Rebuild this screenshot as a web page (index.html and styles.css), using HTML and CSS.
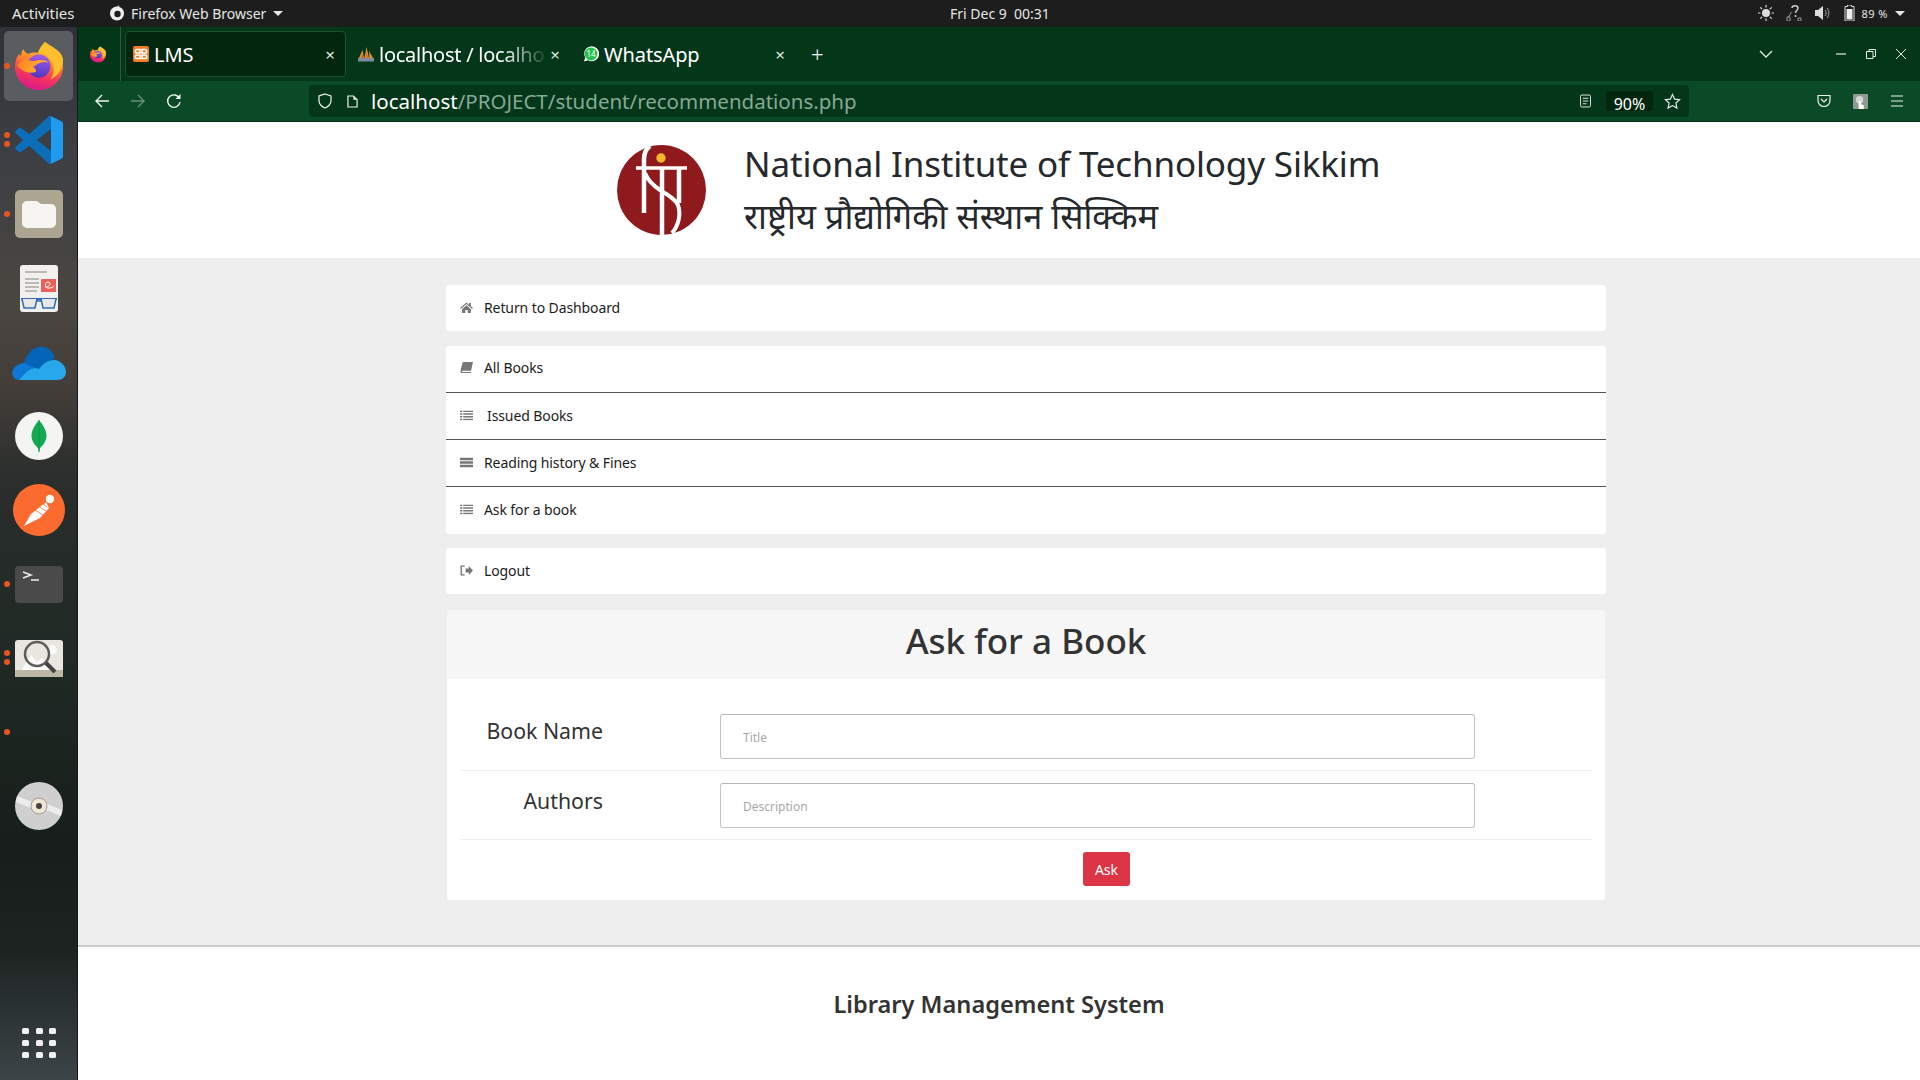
FILE: index.html
```html
<!DOCTYPE html>
<html lang="en">
<head>
<meta charset="utf-8">
<title>LMS</title>
<link rel="stylesheet" href="styles.css">
</head>
<body>
<svg class="defs" width="0" height="0" aria-hidden="true">
  <defs>
    <linearGradient id="fxBody" x1="0.7" y1="0" x2="0.4" y2="1">
      <stop offset="0" stop-color="#ffd93b"/><stop offset="0.35" stop-color="#ff9a26"/><stop offset="0.7" stop-color="#f6365a"/><stop offset="1" stop-color="#d9188f"/>
    </linearGradient>
    <linearGradient id="fxGlobe" x1="0.6" y1="0" x2="0.4" y2="1">
      <stop offset="0" stop-color="#a35ee8"/><stop offset="1" stop-color="#4a35c0"/>
    </linearGradient>
    <linearGradient id="fxFox" x1="0" y1="0" x2="1" y2="0.4">
      <stop offset="0" stop-color="#ff7a1f"/><stop offset="1" stop-color="#ffb52e"/>
    </linearGradient>
    <symbol id="firefox" viewBox="0 0 48 50">
      <path d="M30 1c-3 3-6 7-7 11-4-1-8 0-10 1-2-1-4-3-5-5-1 2-2 5-2 7l-2-2C1 17 0 21 0 26c0 13 11 23 24 23s24-10 24-24C48 14 39 8 30 1z" fill="url(#fxBody)"/>
      <path d="M30 1c-3 3-6 7-7 11 6 0 11 4 14 9 3 6 2 13-2 18 8-4 13-12 13-20 0-8-9-12-18-18z" fill="#ffbe2e"/>
      <circle cx="24" cy="25" r="11.500" fill="url(#fxGlobe)"/>
      <path d="M2 24c3-2 6-5 7-9 2 3 5 5 10 5 5-1 11-2 15 2-4-2-9-1-13 2l-3 2c2 1 3 2 3 5-7 2-14 0-19-7z" fill="url(#fxFox)"/>
    </symbol>
    <symbol id="lines" viewBox="0 0 14 11">
      <path d="M0 0h2.500v1.700H0zM3.500 0H14v1.700H3.500zM0 3h2.500v1.700H0zM3.500 3H14v1.700H3.500zM0 6h2.500v1.700H0zM3.500 6H14v1.700H3.500zM0 9h2.500v1.700H0zM3.500 9H14v1.700H3.500z" fill="#777"/>
    </symbol>
  </defs>
</svg>

<header class="topbar">
  <div class="top-left">
    <span class="activities">Activities</span>
    <span class="app-menu">
      <svg class="ff-mono" viewBox="0 0 16 16"><circle cx="8" cy="8.500" r="7" fill="#eee"/><circle cx="8.500" cy="9" r="3.200" fill="#1d1d1d"/><path d="M9 0l3 4-4 1z" fill="#eee"/></svg>
      Firefox Web Browser
      <i class="caret"></i>
    </span>
  </div>
  <div class="clock">Fri Dec 9&nbsp; 00:31</div>
  <div class="status">
    <svg class="st" viewBox="0 0 16 16"><circle cx="8" cy="8" r="4" fill="#ddd"/><path d="M8 0v2.500M8 13.500V16M0 8h2.500M13.500 8H16M2.300 2.300l1.800 1.800M11.900 11.900l1.800 1.800M2.300 13.700l1.800-1.800M11.900 4.100l1.800-1.800" stroke="#ddd" stroke-width="1.200"/></svg>
    <svg class="st" viewBox="0 0 16 16"><path d="M6 3c0-3 6-3 6 0 0 2-2.500 2.500-2.500 5M9.500 10v2" stroke="#ccc" stroke-width="1.500" fill="none"/><path d="M1 16v-4h3v4zM12 16v-3h3v3zM2.500 12l3-5" stroke="#999" fill="none"/></svg>
    <svg class="st" viewBox="0 0 16 16"><path d="M1 5h3l5-4v14l-5-4H1z" fill="#ddd"/><path d="M11 5c1.500 1.500 1.500 4.500 0 6M13 3c2.500 2.500 2.500 7.500 0 10" stroke="#aaa" fill="none"/></svg>
    <svg class="st batt" viewBox="0 0 10 16"><path d="M3 0h4v1.500h2.500V16H.5V1.500H3z" fill="none" stroke="#ddd"/><rect x="2" y="4" width="6" height="10.500" fill="#eee"/></svg>
    <span class="pct">89 %</span>
    <i class="caret"></i>
  </div>
</header>

<div class="shell">
  <aside class="dock">
    <div class="slot active"><i class="dot one"></i>
      <svg class="app" viewBox="0 0 48 50"><use href="#firefox"/></svg>
    </div>
    <div class="slot"><i class="dot d1"></i><i class="dot d2"></i>
      <svg class="app" viewBox="0 0 100 100"><path fill="#0a6fb8" d="M96.400 10.800 75.900 1a6 6 0 0 0-7 1.200L29.700 38 12.600 25a4 4 0 0 0-5.100.2L2 30.300a4 4 0 0 0 0 5.900L16.800 50 2 63.800a4 4 0 0 0 0 5.900l5.500 5a4 4 0 0 0 5.100.2L29.700 62l39.200 35.800a6 6 0 0 0 7 1.200l20.500-9.800a6.200 6.200 0 0 0 3.600-5.600V16.400a6.200 6.200 0 0 0-3.600-5.600zM75 72.700 45.300 50 75 27.300z"/><path fill="#1f9cf0" d="M72 0.700a6 6 0 0 1 3.900.3l20.500 9.800a6.200 6.200 0 0 1 3.600 5.600v67.200a6.200 6.200 0 0 1-3.600 5.600L75.900 99a6 6 0 0 1-3.900.3c2 0 3-1.500 3-3.500V72.700 27.300 4c0-2-1-3.300-3-3.300z"/></svg>
    </div>
    <div class="slot"><i class="dot one"></i>
      <svg class="app" viewBox="0 0 48 48"><rect width="48" height="48" rx="5" fill="#aca591"/><path d="M7 16a5 5 0 0 1 5-5h9c3 0 3 3 6 3h9a5 5 0 0 1 5 5v14a5 5 0 0 1-5 5H12a5 5 0 0 1-5-5z" fill="#f7f5f2"/></svg>
    </div>
    <div class="slot">
      <svg class="app" viewBox="0 0 38 47"><rect width="38" height="47" rx="3" fill="#f1f0ee"/><path d="M5 7h22M5 14h14M5 18h14M5 22h14M5 26h12" stroke="#a8a69e" stroke-width="1.500"/><rect x="21" y="14" width="15" height="13" fill="#e9605a"/><path d="M25 22c5 0 7-5 3-5-4 0-3 7 1 6 3 0 4-1 5-2" stroke="#fff" fill="none"/><path d="M1 34h36" stroke="#2e6db4" stroke-width="2"/><path d="M2 34l2 9h11l2-9M21 34l2 9h11l2-9M17 36h4" stroke="#2e6db4" stroke-width="1.500" fill="#e8e8e6"/></svg>
    </div>
    <div class="slot">
      <svg class="app wide" viewBox="0 0 54 36"><path d="M12 20C14 8 24 1 32 3c5 1 9 5 11 11L27 26z" fill="#0364b8"/><path d="M12 19C6 19 0 24 0 30c1 3 2 5 6 6l22-10z" fill="#0f78d4"/><path d="M7 36h39c5 0 8-4 8-8 0-6-5-11-11-12-8 0-12 4-16 9-5-2-10-1-20 11z" fill="#28a8ea"/></svg>
    </div>
    <div class="slot">
      <svg class="app" viewBox="0 0 48 48"><circle cx="24" cy="24" r="24" fill="#f4f4f2"/><path d="M24 8c5 6 7.500 11 7.500 16s-4 10-6.500 12l-.6 4h-.8l-.6-4c-2.500-2-6.500-7-6.500-12S19 14 24 8z" fill="#13aa52"/><path d="M24 8v32" stroke="#0e8a42" stroke-width=".6"/></svg>
    </div>
    <div class="slot">
      <svg class="app big" viewBox="0 0 52 52"><circle cx="26" cy="26" r="26" fill="#fb6b30"/><path d="M33 18l3 6-9 10-16 8 7-12z" fill="#fff"/><path d="M22 26l8 5M25 22l8 5M29 19l5 4" stroke="#fb6b30" stroke-width=".8"/><circle cx="37" cy="15" r="4.200" fill="#fff"/></svg>
    </div>
    <div class="slot"><i class="dot one"></i>
      <svg class="app" viewBox="0 0 48 37"><rect width="48" height="37" rx="4" fill="#4a4a4a"/><path d="M8 6l8 3-8 3" stroke="#eee" stroke-width="1.500" fill="none"/><path d="M16 14h8" stroke="#eee" stroke-width="1.500"/></svg>
    </div>
    <div class="slot"><i class="dot d1"></i><i class="dot d2"></i>
      <svg class="app" viewBox="0 0 48 37"><rect width="48" height="37" rx="3" fill="#e8e6df"/><rect y="30" width="48" height="7" fill="#bdb8a6"/><path d="M7 30l9-15 6 7 5-4 8 12z" fill="#fff"/><circle cx="37" cy="10" r="5" fill="#fafafa"/><circle cx="22" cy="14" r="12" fill="none" stroke="#5c5c5c" stroke-width="2.500"/><path d="M31 23l9 9" stroke="#444" stroke-width="4"/></svg>
    </div>
    <div class="slot"><i class="dot one"></i></div>
    <div class="slot">
      <svg class="app" viewBox="0 0 48 48"><circle cx="24" cy="24" r="24" fill="#cfcfcf"/><path d="M2 14l18 7-2 6L1 20zM46 34l-18-7 2-6 17 7z" fill="#ececec"/><circle cx="24" cy="24" r="8" fill="#eee6d6" stroke="#a99"/><circle cx="24" cy="24" r="3" fill="#444"/></svg>
    </div>
    <div class="grid-btn">
      <i></i><i></i><i></i><i></i><i></i><i></i><i></i><i></i><i></i>
    </div>
  </aside>

  <div class="browser">
    <div class="tabbar">
      <div class="tab-home">
        <svg class="ff-small" viewBox="0 0 48 50"><use href="#firefox"/></svg>
      </div>
      <div class="tab selected">
        <svg class="fav" viewBox="0 0 16 16"><rect width="16" height="16" rx="2" fill="#f57c22"/><path d="M4 3.500h3v3.500H4a1.700 1.700 0 0 1 0-3.500zM9 3.500h3a1.700 1.700 0 0 1 0 3.500H9zM4 9h3v3.500H4A1.700 1.700 0 0 1 4 9zM9 9h3a1.700 1.700 0 0 1 0 3.500H9z" fill="none" stroke="#fff" stroke-width="1.600"/></svg>
        <span class="tab-title">LMS</span>
        <span class="tab-x">×</span>
      </div>
      <div class="tab">
        <svg class="fav" viewBox="0 0 16 16"><path d="M1 12L4.500 4 6 12zM6.500 12L8.500 1 11 12zM11.500 12L11 5l4 7z" fill="#ee9330"/><path d="M5 12l-.5-5L3 12zM8.500 12V5l1.500 7z" fill="#b9601a"/><rect y="12" width="16" height="3.500" fill="#7f8ba3"/></svg>
        <span class="tab-title fade">localhost / localho</span>
        <span class="tab-x">×</span>
      </div>
      <div class="tab">
        <svg class="fav" viewBox="0 0 16 16"><path d="M1 15.500l1.200-4a7.500 7.500 0 1 1 2.800 2.800z" fill="#fff"/><circle cx="8" cy="8" r="6.400" fill="#25c04e"/><text class="badge" x="8" y="10.700" text-anchor="middle">14</text></svg>
        <span class="tab-title">WhatsApp</span>
        <span class="tab-x">×</span>
      </div>
      <span class="tab-plus">+</span>
      <div class="win-controls">
        <svg class="chev" viewBox="0 0 14 8"><path d="M1 1l6 6 6-6" fill="none" stroke="#e6ece8" stroke-width="1.300"/></svg>
        <svg class="win min" viewBox="0 0 10 10"><path d="M0 5h10" stroke="#e6ece8" stroke-width="1.200"/></svg>
        <svg class="win max" viewBox="0 0 10 10"><path d="M.5 2.500h6.500v7H.5zM3 2.500V.5h6.500v7H7" fill="none" stroke="#e6ece8"/></svg>
        <svg class="win cls" viewBox="0 0 10 10"><path d="M0 0l10 10M10 0L0 10" stroke="#e6ece8"/></svg>
      </div>
    </div>

    <div class="navbar">
      <div class="nav-btns">
        <svg class="nv" viewBox="0 0 16 16"><path d="M15 8H2M8 2L2 8l6 6" fill="none" stroke="#f0f4f1" stroke-width="1.400"/></svg>
        <svg class="nv off" viewBox="0 0 16 16"><path d="M1 8h13M8 2l6 6-6 6" fill="none" stroke="#f0f4f1" stroke-width="1.400"/></svg>
        <svg class="nv" viewBox="0 0 16 16"><path d="M13.500 5.500A6.200 6.200 0 1 0 14 9" fill="none" stroke="#f0f4f1" stroke-width="1.400"/><path d="M14.500 1v5h-5z" fill="#f0f4f1"/></svg>
      </div>
      <div class="urlbar">
        <svg class="shield" viewBox="0 0 14 16"><path d="M7 1l6 2v5c0 3-3 6-6 7-3-1-6-4-6-7V3z" fill="none" stroke="#f0f4f1" stroke-width="1.200"/></svg>
        <svg class="pageic" viewBox="0 0 12 14"><path d="M1 1h6l4 4v8H1z" fill="none" stroke="#f0f4f1" stroke-width="1.300"/><path d="M7 1v4h4" fill="#f0f4f1"/></svg>
        <span class="url"><b>localhost</b>/PROJECT/student/recommendations.php</span>
        <svg class="reader" viewBox="0 0 12 14"><rect x=".5" y=".5" width="11" height="13" rx="1.500" fill="none" stroke="#eef2ef"/><path d="M3 4h6M3 7h6M3 10h4" stroke="#eef2ef"/></svg>
        <span class="zoom">90%</span>
        <svg class="star" viewBox="0 0 18 18"><path d="M9 1.500l2.300 5 5.200.6-3.900 3.500 1.100 5.400L9 13.300 4.300 16l1.100-5.400L1.500 7.100l5.200-.6z" fill="none" stroke="#eef2ef" stroke-width="1.200"/></svg>
      </div>
      <div class="nav-right">
        <svg class="nr" viewBox="0 0 14 14"><path d="M1 1.500h12v5a6 6 0 0 1-12 0z" fill="none" stroke="#eef2ef" stroke-width="1.200"/><path d="M4 5l3 3 3-3" fill="none" stroke="#eef2ef" stroke-width="1.200"/></svg>
        <svg class="nr ext" viewBox="0 0 16 16"><rect width="16" height="16" rx="1" fill="#8f9a94"/><circle cx="7" cy="6" r="4" fill="#d0d6d2"/><path d="M6 16V9c0-2 2.500-2 2.500 0v2l3 1v4z" fill="#fff"/></svg>
        <svg class="nr" viewBox="0 0 14 14"><path d="M1 2h12M1 7h12M1 12h12" stroke="#eef2ef" stroke-width="1.200"/></svg>
      </div>
    </div>

    <div class="page">
      <div class="site-head">
        <svg class="logo" viewBox="0 0 89 90">
          <ellipse cx="44.500" cy="45" rx="44.500" ry="45" fill="#8f1a1e"/>
          <circle cx="44" cy="13" r="4.700" fill="#f6b72a"/>
          <path d="M19 23h51" fill="none" stroke="#fff" stroke-width="3.500"/>
          <path d="M33 1c-4 3-6 7-6 13v54" fill="none" stroke="#fff" stroke-width="4.500"/>
          <path d="M45 23v67M62 23v35" fill="none" stroke="#fff" stroke-width="4.500"/>
          <path d="M28 28c3 8 9 13 15 17 8 5 15 9 18 15 3 9 1 20-6 28" fill="none" stroke="#fff" stroke-width="4"/>
        </svg>
        <div class="head-text">
          <div class="inst-en">National Institute of Technology Sikkim</div>
          <div class="inst-hi" lang="hi">राष्ट्रीय प्रौद्योगिकी संस्थान सिक्किम</div>
        </div>
      </div>

      <main class="content">
        <div class="wrap">
          <div class="menu-card single"><a class="item">
            <svg class="mi" viewBox="0 0 14 12"><path d="M7 .5L0 6.500l.8 1L7 2.200l6.200 5.300.8-1L11.800 4.600V1h-2v1.900zM2.200 7.800L7 3.600l4.800 4.200V12H8.300V8.800H5.700V12H2.200z" fill="#777"/></svg>
            Return to Dashboard</a></div>
          <div class="menu-card">
            <a class="item">
              <svg class="mi" viewBox="0 0 14 12"><path d="M3 0h11l-2 9.500H2.500C2 9.500 2 11 2.500 11H12v1H2C0 12 .5 9 1 7z" fill="#777"/></svg>
              All Books</a>
            <a class="item indent">
              <svg class="mi" viewBox="0 0 14 11"><use href="#lines"/></svg>
              Issued Books</a>
            <a class="item">
              <svg class="mi" viewBox="0 0 14 10"><path d="M0 0h14v2.600H0zM0 3.700h14v2.600H0zM0 7.400h14V10H0z" fill="#777"/></svg>
              Reading history &amp; Fines</a>
            <a class="item">
              <svg class="mi" viewBox="0 0 14 11"><use href="#lines"/></svg>
              Ask for a book</a>
          </div>
          <div class="menu-card single"><a class="item">
            <svg class="mi" viewBox="0 0 14 12"><path d="M5 2H2v8h3v1.500H.5v-11H5zM6 3.800h3.500V1l4.500 5-4.500 5V8.200H6z" fill="#777"/></svg>
            Logout</a></div>

          <section class="panel">
            <h2 class="panel-head">Ask for a Book</h2>
            <form class="panel-body">
              <div class="row first">
                <label class="lbl">Book Name</label>
                <input class="field" placeholder="Title">
              </div>
              <div class="row">
                <label class="lbl">Authors</label>
                <input class="field" placeholder="Description">
              </div>
              <div class="actions"><button class="ask" type="button">Ask</button></div>
            </form>
          </section>
        </div>
      </main>

      <footer class="site-foot">Library Management System</footer>
    </div>
  </div>
</div>
</body>
</html>
```
FILE: styles.css
```css
* { box-sizing: border-box; }
html, body { margin: 0; height: 100%; }
body {
  width: 1920px; height: 1080px; overflow: hidden;
  font-family: "Noto Sans", "Open Sans", sans-serif;
  display: grid; grid-template-rows: 27px 1fr;
  background: #fff; color: #222;
}
.defs { position: absolute; }

/* top bar */
.topbar {
  display: grid; grid-template-columns: 950px auto 1fr; align-items: center;
  background: #1d1d1d; color: #e6e6e6; font-size: 14px; height: 27px; padding-bottom: 1px;
}
.top-left { display: flex; align-items: center; padding-left: 12px; }
.activities { width: 97px; font-size: 15px; }
.app-menu { display: flex; align-items: center; gap: 6px; }
.ff-mono { width: 16px; height: 16px; }
.caret { display: inline-block; width: 0; height: 0; border: 5px solid transparent; border-top: 5px solid #e6e6e6; border-bottom: 0; margin-left: 1px; }
.clock { font-size: 14px; }
.status { display: flex; align-items: center; justify-content: flex-end; padding-right: 15px; gap: 12px; }
.st { width: 16px; height: 16px; }
.batt { width: 11px; margin-left: 2px; }
.pct { font-size: 11px; margin-left: -6px; margin-right: -6px; letter-spacing: .5px; }

.shell { display: flex; min-height: 0; }

/* dock */
.dock {
  width: 78px; flex: none; display: flex; flex-direction: column; padding-top: 2px; padding-bottom: 22px;
  background: linear-gradient(180deg, #2e3137 0%, #3d3f44 12%, #4a4641 26%, #443e3a 34%, #2a2e2c 43%, #1f2924 62%, #171d1a 78%, #1e2422 88%, #3b4447 100%);
  border-right: 1px solid #14181a;
}
.slot { position: relative; height: 74px; flex: none; display: flex; align-items: center; justify-content: center; }
.slot.active::before { content: ""; position: absolute; left: 4px; right: 4px; top: 2px; bottom: 2px; background: #5a5c60; border-radius: 5px; }
.app { position: relative; width: 48px; height: 50px; }
.slot:nth-child(2) .app, .slot:nth-child(3) .app, .slot:nth-child(6) .app, .slot:nth-child(11) .app { height: 48px; }
.app.wide { width: 54px; height: 36px; }
.app.big { width: 52px; height: 52px; }
.slot:nth-child(4) .app { width: 38px; height: 47px; }
.slot:nth-child(8) .app, .slot:nth-child(9) .app { height: 37px; }
.dot { position: absolute; left: 4px; width: 6px; height: 6px; border-radius: 50%; background: #e95420; z-index: 1; }
.dot.one { top: 34px; }
.dot.d1 { top: 29px; }
.dot.d2 { top: 38px; }
.grid-btn { margin: auto 0 0 22px; width: 34px; height: 30px; display: grid; grid-template-columns: repeat(3, 7px); grid-auto-rows: 6px; justify-content: space-between; align-content: space-between; }
.grid-btn i { background: #f0f0f0; border-radius: 1.500px; }

/* browser chrome */
.browser { flex: 1; min-width: 0; display: flex; flex-direction: column; }
.tabbar { height: 54px; flex: none; background: #04361a; display: flex; align-items: center; color: #fff; }
.tab-home { width: 43px; height: 100%; flex: none; border-right: 1px solid #2f5a41; display: flex; align-items: center; justify-content: center; margin-right: 4px; }
.ff-small { width: 16px; height: 17px; margin-right: 2px; }
.tab { width: 221px; height: 46px; flex: none; margin-right: 4px; display: flex; align-items: center; padding-left: 7px; padding-right: 10px; border-radius: 4px; border: 1px solid transparent; }
.tab.selected { background: #03260f; border-color: #1c5233; }
.fav { width: 16px; height: 16px; flex: none; margin-right: 5px; }
.badge { font-size: 8px; fill: #fff; font-family: "Noto Sans", sans-serif; }
.tab-title { flex: 1; font-size: 20px; white-space: nowrap; letter-spacing: -.1px; }
.fade { letter-spacing: -.25px; -webkit-mask-image: linear-gradient(90deg, #000 72%, rgba(0,0,0,.15) 95%, rgba(0,0,0,.1) 100%); mask-image: linear-gradient(90deg, #000 72%, rgba(0,0,0,.15) 95%, rgba(0,0,0,.1) 100%); }
.tab-x { font-size: 17px; line-height: 1; color: #dfe7e2; width: 10px; text-align: center; }
.tab-plus { font-size: 22px; line-height: 1; margin-left: 11px; font-weight: 300; }
.win-controls { margin-left: auto; display: flex; align-items: center; padding-right: 14px; }
.chev { width: 14px; height: 8px; margin-right: 63px; }
.win { width: 10px; height: 10px; margin-left: 20px; }
.win.min { margin-left: 0; }

.navbar { height: 41px; flex: none; background: #0b4a26; border-bottom: 1px solid #052c16; display: flex; align-items: center; }
.nav-btns { display: flex; align-items: center; gap: 20px; padding-left: 16px; width: 231px; }
.nv { width: 16px; height: 16px; }
.nv.off { opacity: .4; }
.urlbar { width: 1380px; height: 32px; background: #04361a; border-radius: 4px; display: flex; align-items: center; padding-left: 9px; padding-right: 8px; color: #fff; }
.shield { width: 14px; height: 16px; margin-right: 15px; }
.pageic { width: 11px; height: 13px; margin-right: 13px; }
.url { flex: 1; font-size: 20.500px; color: #86a996; letter-spacing: 0; }
.url b { font-weight: 400; color: #fff; }
.reader { width: 11px; height: 14px; }
.zoom { width: 47px; height: 20px; margin-left: 15px; margin-right: 11px; background: #03260f; border-radius: 3px; text-align: center; font-size: 16px; line-height: 26px; }
.star { width: 17px; height: 17px; }
.nav-right { display: flex; align-items: center; padding-left: 128px; gap: 22px; }
.nr { width: 14px; height: 14px; }
.nr.ext { width: 15px; height: 15px; }

/* page */
.page { flex: 1; min-height: 0; display: flex; flex-direction: column; background: #fff; }
.site-head { height: 136px; flex: none; background: #fff; display: flex; align-items: center; padding-left: 539px; gap: 38px; }
.logo { width: 89px; height: 90px; flex: none; }
.head-text { color: #25282c; }
.inst-en { font-size: 35px; line-height: 52px; letter-spacing: -.16px; }
.inst-hi { font-size: 34.400px; line-height: 52px; }

.content { height: 687px; flex: none; background: #eeeeee; padding: 27px 0 0 368px; }
.wrap { width: 1160px; display: flex; flex-direction: column; }
.menu-card { background: #fff; border-radius: 3px; margin-bottom: 14px; display: flex; flex-direction: column; }
.menu-card:first-child { margin-bottom: 15px; }
.item { height: 47px; display: flex; align-items: center; padding: 0 0 2px 14px; font-size: 14px; color: #1c1c1c; border-bottom: 1px solid #555; letter-spacing: -.1px; }
.item:first-child { padding-bottom: 3px; }
.item:last-child { border-bottom: 0; padding-bottom: 2px; }
.single .item { height: 46px; }
.mi { width: 13px; height: 11px; margin-right: 11px; flex: none; }
.indent .mi { margin-right: 14px; }

.panel { margin: 2px 1px 0; background: #fff; border-radius: 3px; height: 290px; display: flex; flex-direction: column; }
.panel-head { margin: 0; height: 69px; flex: none; background: #f6f6f6; text-align: center; font-size: 35px; font-weight: 500; color: #333; line-height: 62px; }
.panel-body { padding: 0 13px; display: flex; flex-direction: column; }
.row { display: grid; grid-template-columns: 143px 755px; column-gap: 117px; padding: 12px 0 11px; border-bottom: 1px solid #eee; }
.row.first { padding-top: 35px; }
.lbl { font-size: 21.300px; font-weight: 400; text-align: right; color: #333; line-height: 30px; align-self: start; padding-top: 3px; }
.first .lbl { padding-top: 2px; }
.field { height: 45px; width: 755px; border: 1px solid #c4c4c4; border-top-color: #b5b5b5; border-radius: 3px; padding: 2px 22px 0; font-family: "Noto Sans", sans-serif; font-size: 12px; background: #fff; }
.field::placeholder { color: #a9a9a9; opacity: 1; }
.actions { padding: 12px 0 0 623px; }
.ask { width: 47px; height: 34px; border: 0; border-radius: 3px; background: #dc3545; color: #fff; font-family: "Noto Sans", sans-serif; font-size: 14px; padding: 0; }

.site-foot { height: 135px; flex: none; background: #fff; border-top: 2px solid #ccc; text-align: center; font-size: 23.600px; font-weight: 600; color: #333; padding-top: 39px; line-height: 36px; }
```
